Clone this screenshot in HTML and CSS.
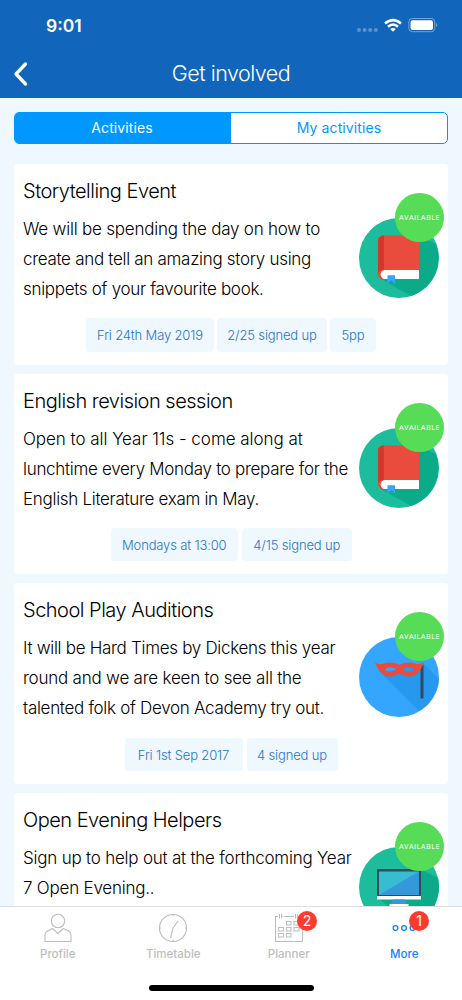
FILE: index.html
```html
<!DOCTYPE html>
<html lang="en">
<head>
<meta charset="utf-8">
<title>Get involved</title>
<link rel="stylesheet" href="styles.css">
</head>
<body>
<svg class="defs" aria-hidden="true">
  <symbol id="book" viewBox="0 0 80 80">
    <circle cx="40" cy="40" r="40" fill="#1dbc9c"/>
    <path d="M60 18L77 26A40 40 0 0 1 52 78L22 61Z" fill="#0bab8a"/>
    <path d="M25 17.500H60V62H25Q19 61 19 56V23Q19 17.500 25 17.500Z" fill="#e94b3c"/>
    <path d="M25 17.500V52Q19 52 19 57V23Q19 17.500 25 17.500Z" fill="#cf3a2b"/>
    <path d="M60 52H25A4.700 4.700 0 0 0 25 61H60Z" fill="#fff"/>
    <path d="M28.500 57.300H36V65.500L32.200 62.300L28.500 65.500Z" fill="#35a6fd"/>
  </symbol>
  <symbol id="mask" viewBox="0 0 80 80">
    <circle cx="40" cy="40" r="40" fill="#35a6fd"/>
    <path d="M64 26L80 42A40 40 0 0 1 60 74L22 36Z" fill="#2698ed"/>
    <path d="M61.500 28H64.500V61.500H61.500Z" fill="#34495e"/>
    <path fill-rule="evenodd" d="M16 25.500Q20 28 25 26.500C31 24.500 37 26 40.500 28C44 26 50 24.500 56 26.500Q61 28 65 25.500C62 33 58 39.500 50 39.500C45 39.500 43 37 40.500 37C38 37 36 39.500 31 39.500C23 39.500 19 33 16 25.500ZM26 32.500C28 35.500 35 35.500 37 32C34 29.500 28 29.500 26 32.500ZM44 32C46 35.500 53 35.500 55 32.500C53 29.500 47 29.500 44 32Z" fill="#e94b3c"/>
  </symbol>
  <symbol id="screen" viewBox="0 0 80 80">
    <circle cx="40" cy="40" r="40" fill="#1dbc9c"/>
    <path d="M61 22L79 31A40 40 0 0 1 55 77L30 60L19 51Z" fill="#0bab8a"/>
    <rect x="18" y="22" width="44" height="28" fill="#34495e"/>
    <rect x="20" y="24.500" width="40" height="23.500" fill="#36bdd0"/>
    <path d="M60 24.500V48H20Z" fill="#3498db"/>
    <path d="M18 49H62V52.500H18Z" fill="#fff"/>
    <path d="M34 52.500H46L48 58H32Z" fill="#3498db"/>
    <path d="M30.500 57H49.500V59H30.500Z" fill="#fff"/>
  </symbol>
</svg>
<div class="phone">
  <header class="header">
    <div class="status">
      <span class="time">9:01</span>
      <svg class="signals" viewBox="0 0 82 18">
        <g fill="#fff" opacity=".3"><circle cx="2" cy="13" r="2"/><circle cx="7.600" cy="13" r="2"/><circle cx="13.200" cy="13" r="2"/><circle cx="18.800" cy="13" r="2"/></g>
        <g fill="none" stroke="#fff" stroke-width="2.500"><path d="M28 6.500Q36 -.300 44 6.500"/><path d="M31 9.700Q36 5.400 41 9.700"/></g>
        <path d="M33.200 12Q36 9.800 38.800 12L36 14.800Z" fill="#fff"/>
        <rect x="51.800" y="1.500" width="26" height="13.200" rx="3.500" fill="none" stroke="#fff" opacity=".4"/>
        <rect x="53.500" y="3.300" width="22.500" height="9.600" rx="2" fill="#fff"/>
        <path d="M79.200 6Q81.300 8 79.200 10Z" fill="#fff" opacity=".5"/>
      </svg>
    </div>
    <div class="nav">
      <svg class="back" viewBox="0 0 16 26"><path d="M12.500 3L3 13L12.500 23" fill="none" stroke="#fff" stroke-width="3.300" stroke-linecap="round" stroke-linejoin="round"/></svg>
      <h1>Get involved</h1>
    </div>
  </header>
  <main class="content">
    <div class="tabs"><div class="tab active">Activities</div><div class="tab">My activities</div></div>
    <article class="card">
      <div class="row">
        <div class="copy"><h2>Storytelling Event</h2><p><span class="loose">We will be spending the day on how to</span><br>create and tell an amazing story using<br>snippets of your favourite book.</p></div>
        <div class="art"><svg><use href="#book"/></svg><span class="flag">AVAILABLE</span></div>
      </div>
      <div class="chips tight"><span class="c127">Fri 24th May 2019</span><span class="c109">2/25 signed up</span><span class="c46">5pp</span></div>
    </article>
    <article class="card">
      <div class="row">
        <div class="copy"><h2>English revision session</h2><p><span class="wide">Open to all Year 11s - come along at</span><br>lunchtime every Monday to prepare for the<br>English Literature exam in May.</p></div>
        <div class="art"><svg><use href="#book"/></svg><span class="flag">AVAILABLE</span></div>
      </div>
      <div class="chips"><span class="c127">Mondays at 13:00</span><span class="c109">4/15 signed up</span></div>
    </article>
    <article class="card">
      <div class="row">
        <div class="copy"><h2>School Play Auditions</h2><p>It will be Hard Times by Dickens this year<br><span class="loose">round and we are keen to see all the</span><br>talented folk of Devon Academy try out.</p></div>
        <div class="art"><svg><use href="#mask"/></svg><span class="flag">AVAILABLE</span></div>
      </div>
      <div class="chips"><span class="c118">Fri 1st Sep 2017</span><span class="c90">4 signed up</span></div>
    </article>
    <article class="card">
      <div class="row">
        <div class="copy"><h2>Open Evening Helpers</h2><p><span class="loose">Sign up to help out at the forthcoming Year</span><br><span class="loose">7 Open Evening..</span></p></div>
        <div class="art"><svg><use href="#screen"/></svg><span class="flag">AVAILABLE</span></div>
      </div>
    </article>
  </main>
  <footer class="tabbar">
    <div class="items">
      <div class="item"><svg viewBox="0 0 30 30"><g><circle cx="15" cy="8" r="6.700"/><path d="M2 28.500V22Q2 19.500 4.500 18L9.500 15.500L15 20.500L20.500 15.500L25.500 18Q28 19.500 28 22V28.500Z"/></g></svg><span>Profile</span></div>
      <div class="item"><svg viewBox="0 0 30 30"><g><circle cx="15" cy="15" r="13.500"/><path d="M20 8L15 15L12.500 25M15 1.500V3M15 27V28.500M1.500 15H3M27 15H28.500"/></g></svg><span>Timetable</span></div>
      <div class="item"><svg viewBox="0 0 30 30"><g><path d="M4 3.500H1.500V28.500H28.500V3.500M9.500 3.500H20M5.500 1V5.500M7.700 1V5.500M21.500 1V5.500M23.700 1V5.500"/><path d="M12.500 8.500H17V12H12.500ZM20 8.500H25V12H20ZM4.500 14.500H9.500V18H4.500ZM12.500 14.500H17V18H12.500ZM20 14.500H25V18H20ZM4.500 20.500H9.500V24H4.500ZM12.500 20.500H17V24H12.500Z"/></g></svg><span>Planner</span><b class="badge">2</b></div>
      <div class="item more"><svg viewBox="0 0 30 30"><g><circle cx="6.500" cy="15" r="2.400"/><circle cx="15" cy="15" r="2.400"/><circle cx="23.500" cy="15" r="2.400"/></g></svg><span>More</span><b class="badge">1</b></div>
    </div>
    <div class="home"></div>
  </footer>
</div>
</body>
</html>
```

FILE: styles.css
```css
* { box-sizing: border-box; }
body { margin: 0; font-family: Inter, sans-serif; }
h1, h2, p { margin: 0; font-weight: 300; }
.defs { display: none; }
.phone { width: 462px; height: 1000px; display: flex; flex-direction: column; background: #eff7ff; overflow: hidden; }
.header { height: 98px; flex: none; background: #1165bb; color: #fff; }
.status { height: 50px; display: flex; justify-content: space-between; padding: 15px 23px 0 46px; }
.time { font-size: 17.500px; line-height: 22px; font-weight: 600; }
.signals { width: 82px; height: 18px; margin-top: 2px; }
.nav { height: 48px; display: grid; grid-template-columns: 30px 1fr 30px; align-items: center; }
.back { width: 16px; height: 26px; margin-left: 13px; }
h1 { font-size: 21.5px; text-align: center; line-height: 28px; letter-spacing: -.52px; padding-bottom: 2px; }
.content { flex: 1; min-height: 0; overflow: hidden; padding: 14px 14px 0; display: flex; flex-direction: column; gap: 9px; }
.tabs { flex: none; height: 32px; margin-bottom: 11px; display: grid; grid-template-columns: 1fr 1fr; border: 1px solid #0097ff; border-radius: 5px; overflow: hidden; background: #fff; }
.tab { text-align: center; font-size: 14px; line-height: 30px; color: #0097ff; letter-spacing: .1px; }
.active { color: #fff; background: #0097ff; padding-right: 2px; }
.card { flex: none; height: 200.700px; background: #fff; border-radius: 3px; padding: 12px 9px 0; }
.row { display: flex; height: 142.300px; white-space: nowrap; }
.copy { width: 336px; flex: none; color: #000; }
h2 { font-size: 20px; line-height: 30px; letter-spacing: -.5px; }
p { font-size: 17px; line-height: 30px; padding-top: 8px; letter-spacing: -.3px; }
.loose { letter-spacing: -.22px; }
.wide { letter-spacing: -.04px; }
.art { position: relative; width: 80px; height: 80px; margin-top: 42px; }
.art svg { display: block; width: 80px; height: 80px; }
.flag { position: absolute; left: 36px; top: -25px; width: 49px; height: 49px; border-radius: 50%; background: #56dc56; color: #fff; text-align: center; font: 7.500px/49px "Open Sans", sans-serif; letter-spacing: .4px; }
.chips { display: flex; justify-content: center; gap: 4px; color: #2775c8; font-weight: 300; font-size: 13px; line-height: 34px; letter-spacing: -.15px; text-align: center; white-space: nowrap; }
.tight { gap: 3.500px; }
.chips span { height: 33.500px; border-radius: 4px; background: #eff7ff; }
.c127 { width: 127.500px; }
.c109 { width: 109.500px; }
.c46 { width: 45.500px; }
.c118 { width: 118px; }
.c90 { width: 91px; }
.tabbar { height: 94px; flex: none; background: #fff; border-top: 1px solid #dedede; }
.items { display: grid; grid-template-columns: repeat(4, 1fr); height: 78px; }
.item { position: relative; display: flex; flex-direction: column; align-items: center; padding-top: 6px; color: #bdbdbd; font-size: 11.500px; font-weight: 500; line-height: 20px; }
.item svg { width: 30px; height: 30px; margin-bottom: 1px; }
.item g { fill: none; stroke: currentColor; stroke-width: 1.100; }
.more { color: #0b84ff; }
.more g { stroke-width: 1.300; }
.badge { position: absolute; left: 66px; top: 4px; width: 20px; height: 20px; border-radius: 50%; background: #ff3b30; color: #fff; text-align: center; font-weight: 400; font-size: 14px; line-height: 20px; }
.more .badge { left: 62.500px; }
.home { width: 165px; height: 6px; border-radius: 3px; background: #000; margin: 0 auto; }
```
